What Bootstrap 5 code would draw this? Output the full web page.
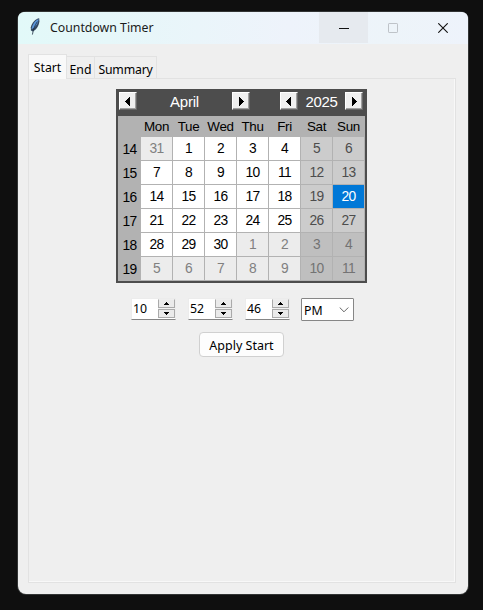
<!DOCTYPE html>
<html lang="en">
<head>
<meta charset="utf-8">
<meta name="viewport" content="width=device-width, initial-scale=1">
<title>Countdown Timer</title>
<link href="https://cdn.jsdelivr.net/npm/bootstrap@5.3.0/dist/css/bootstrap.min.css" rel="stylesheet">
<style>
body{background:#0f0f0f;font:12.3px/16px "Noto Sans","Open Sans",sans-serif;color:#000;width:483px;height:610px;padding:12px 15px 16px 18px;overflow:hidden}
svg{display:block}
.win{width:450px;height:582px;background:#efefef;border-radius:8px;box-shadow:0 0 0 1px #323434}
.titlebar{height:32px;background:linear-gradient(90deg,#e2f9f9 0,#e6f7f9 20%,#eef3fb 60%,#edf4f9 82%,#eef3fb 100%)}
.feather{margin:6px 0 0 12px}
.caption{margin-left:10px;width:251px;line-height:32px;font-size:12.3px;color:#1b1b1b;white-space:nowrap}
.winbtn{width:50px;height:31px}
.winbtn.hov{width:49px;background:#e6eaef}
.tabs{height:25px;margin:10px 0 0 10px}
.tab-item{height:23px;border:1px solid #e2e2e2;border-left:0;border-bottom:0;padding-top:5px;text-align:center;white-space:nowrap}
.tab-item.on{height:25px;width:39px;background:#f9f9f9;border-left:1px solid #e2e2e2;position:relative}
.t-end{width:28px}.t-sum{width:62px;letter-spacing:-.2px}
.pane{width:428px;height:505px;margin:-1px 0 0 10px;border:1px solid #e2e2e2;box-shadow:inset -1px -1px 0 #f8f8f8}
.cal{width:251px;height:194px;margin-top:10px;margin-left:87px;background:#4d4d4d;padding:0 2px 2px;font-family:"Liberation Sans",Arial,sans-serif}
.calhead{height:27px;color:#fff;font-size:15px;padding:3px 2px 0 1px}
.arrow{width:18px;height:18px;background:#f0f0f0;border:1px solid #fff;border-right-color:#696969;border-bottom-color:#696969;box-shadow:inset -1px -1px 0 #a0a0a0;padding:4px 0 0 5px}
.arrow.nx{padding-left:6px}
.month{width:95px;text-align:center;line-height:20px;letter-spacing:-.2px}
.year{width:47px;text-align:center;line-height:20px;font-size:15px;letter-spacing:-.3px}
.days{display:grid;grid-template-columns:22px repeat(7,31px);grid-template-rows:20px repeat(6,23px);gap:1px;background:#b2b2b2;height:165px;font-size:13.8px;letter-spacing:-.6px;text-align:center;line-height:24px}
.days>span{background:#fff;white-space:nowrap;height:23px}
.days>.hd{height:20px;background:#b2b2b2;line-height:22px;font-size:13.4px;letter-spacing:-.3px}
.days>.wk{background:#b2b2b2;line-height:25px;padding-left:1px}
.days>.we{background:#ccc;color:#4d4d4d}
.days>.ot{background:#ececec;color:#808080}
.days>.ow{background:#bfbfbf;color:#737373}
.days>.pick{background:#0078d7;color:#fff}
.timerow{margin:15px 0 0 102px}
.spin{width:45px;height:22px;margin-right:12px;background:#fff;border:1px solid #ececec;border-bottom-color:#858585;padding-left:1px;line-height:19px}
.steps{width:17px;height:19px;background:#f0f0f0}
.step{width:17px;height:9px;background:#eaeaea;border:1px solid #aaa;border-top-color:#eee;margin-bottom:1px}
.step+.step{height:9px;border-top-color:#aaa}
.step svg{margin:2px 0 0 5px}
.ampm{width:53px;height:23px;margin-left:-1px;background:#fff;border:1px solid #868686;border-radius:1px;padding:2px 4px 0 2px;line-height:20px}
.chev{margin-top:6px}
.apply{width:85px;height:25px;margin:11px 0 0 170px;background:#fdfdfd;border:1px solid #d0d0d0;border-radius:4px;color:#000;font-size:12.5px;line-height:25px;white-space:nowrap}
</style>
</head>
<body>
<div class="win d-flex flex-column">
  <header class="titlebar d-flex rounded-top-2">
    <svg class="feather" width="10" height="18" viewBox="0 0 10 18"><path d="M9.2.3C5.8.8 1.8 4.6.8 9.2L.9 12.5 2.8 13.4C5.8 12.2 9 8.2 9.4 3.2Z" fill="#34475f"/><path d="M8.6 1C5.2 2.4 2.2 6.3 1.5 11.2 5.2 9.6 8.2 6 8.6 1Z" fill="#5b97db"/><path d="M7.4 3.6C5 7 3.4 10.8 2.4 16.6" fill="none" stroke="#1c2c40" stroke-width=".8"/></svg>
    <div class="caption">Countdown Timer</div>
    <div class="winbtn hov d-flex align-items-center justify-content-center ms-auto"><svg width="10" height="10"><path d="M0 4.5H10V5.5H0Z" fill="#111" shape-rendering="crispEdges"/></svg></div>
    <div class="winbtn d-flex align-items-center justify-content-center"><svg width="10" height="10"><rect x=".5" y=".5" width="9" height="9" rx=".6" fill="none" stroke="#bec3c8"/></svg></div>
    <div class="winbtn d-flex align-items-center justify-content-center"><svg width="10" height="10"><path d="M.3.3 9.7 9.7M9.7.3.3 9.7" stroke="#111" stroke-width="1.1"/></svg></div>
  </header>
  <nav class="tabs d-flex align-items-end">
    <div class="tab-item on">Start</div><div class="tab-item t-end">End</div><div class="tab-item t-sum">Summary</div>
  </nav>
  <main class="pane">
    <section class="cal">
      <div class="calhead d-flex">
        <div class="arrow"><svg width="5" height="9"><path d="M5 0V9H4V8H3V7H2V6H1V5H0V4H1V3H2V2H3V1H4V0Z"/></svg></div>
        <div class="month">April</div>
        <div class="arrow nx"><svg width="5" height="9"><path d="M0 0V9H1V8H2V7H3V6H4V5H5V4H4V3H3V2H2V1H1V0Z"/></svg></div>
        <div class="arrow ms-auto"><svg width="5" height="9"><path d="M5 0V9H4V8H3V7H2V6H1V5H0V4H1V3H2V2H3V1H4V0Z"/></svg></div>
        <div class="year">2025</div>
        <div class="arrow nx"><svg width="5" height="9"><path d="M0 0V9H1V8H2V7H3V6H4V5H5V4H4V3H3V2H2V1H1V0Z"/></svg></div>
      </div>
      <div class="days">
        <span class="hd"></span><span class="hd">Mon</span><span class="hd">Tue</span><span class="hd">Wed</span><span class="hd">Thu</span><span class="hd">Fri</span><span class="hd">Sat</span><span class="hd">Sun</span>
        <span class="wk">14</span><span class="ot">31</span><span>1</span><span>2</span><span>3</span><span>4</span><span class="we">5</span><span class="we">6</span>
        <span class="wk">15</span><span>7</span><span>8</span><span>9</span><span>10</span><span>11</span><span class="we">12</span><span class="we">13</span>
        <span class="wk">16</span><span>14</span><span>15</span><span>16</span><span>17</span><span>18</span><span class="we">19</span><span class="pick">20</span>
        <span class="wk">17</span><span>21</span><span>22</span><span>23</span><span>24</span><span>25</span><span class="we">26</span><span class="we">27</span>
        <span class="wk">18</span><span>28</span><span>29</span><span>30</span><span class="ot">1</span><span class="ot">2</span><span class="ow">3</span><span class="ow">4</span>
        <span class="wk">19</span><span class="ot">5</span><span class="ot">6</span><span class="ot">7</span><span class="ot">8</span><span class="ot">9</span><span class="ow">10</span><span class="ow">11</span>
      </div>
    </section>
    <div class="timerow d-flex">
      <div class="spin d-flex justify-content-between">10<div class="steps"><div class="step"><svg width="5" height="3"><path d="M2 0H3V1H4V2H5V3H0V2H1V1H2Z"/></svg></div><div class="step"><svg width="5" height="3"><path d="M0 0H5V1H4V2H3V3H2V2H1V1H0Z"/></svg></div></div></div>
      <div class="spin d-flex justify-content-between">52<div class="steps"><div class="step"><svg width="5" height="3"><path d="M2 0H3V1H4V2H5V3H0V2H1V1H2Z"/></svg></div><div class="step"><svg width="5" height="3"><path d="M0 0H5V1H4V2H3V3H2V2H1V1H0Z"/></svg></div></div></div>
      <div class="spin d-flex justify-content-between">46<div class="steps"><div class="step"><svg width="5" height="3"><path d="M2 0H3V1H4V2H5V3H0V2H1V1H2Z"/></svg></div><div class="step"><svg width="5" height="3"><path d="M0 0H5V1H4V2H3V3H2V2H1V1H0Z"/></svg></div></div></div>
      <div class="ampm d-flex justify-content-between">PM<svg class="chev" width="10" height="6"><path d="M.7.5 5 4.8 9.3.5" fill="none" stroke="#666"/></svg></div>
    </div>
    <button class="apply btn p-0 d-block" type="button">Apply Start</button>
  </main>
</div>
<script src="https://cdn.jsdelivr.net/npm/bootstrap@5.3.0/dist/js/bootstrap.bundle.min.js"></script>
</body>
</html>
